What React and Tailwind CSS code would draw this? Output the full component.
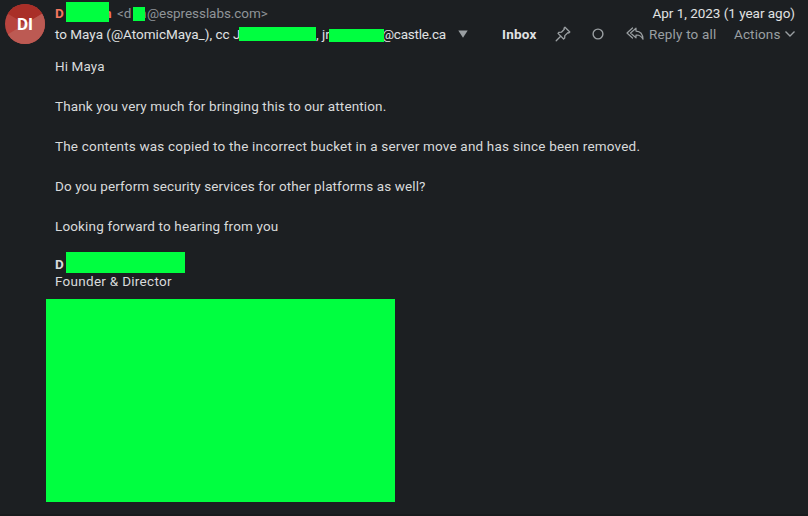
function Redaction({ className }) {
  return <span className={`relative z-10 block shrink-0 bg-[#00ff40] ${className}`} />;
}

function Avatar() {
  return (
    <div className="relative mt-1 ml-[5px] size-10 shrink-0">
      <svg viewBox="0 0 40 40" className="size-10">
        <defs>
          <clipPath id="avatar">
            <circle cx="20" cy="20" r="20" />
          </clipPath>
        </defs>
        <g clipPath="url(#avatar)">
          <rect width="40" height="40" fill="#b8443e" />
          <path d="M20 20 L0 8 V0 H40 V8 Z" fill="#a92f28" />
          <path d="M20 20 L40 8 V40 H0 V32 Z" fill="#bc5a53" />
        </g>
      </svg>
      <span className="absolute inset-0 flex items-center justify-center pt-0.5 text-[17px] font-bold text-white">DI</span>
    </div>
  );
}

function Header() {
  return (
    <header className="flex h-[46px] w-full items-start whitespace-nowrap">
      <Avatar />
      <div className="ml-[10px] w-[447px] shrink-0">
        <div className="flex h-6 items-start leading-[27px]">
          <span className="w-[11px] shrink-0 font-bold text-[#f4775f]">D</span>
          <Redaction className="mt-0.5 h-5 w-[43px]" />
          <span className="ml-[-5px] w-2 shrink-0 font-bold text-[#f4775f]">n</span>
          <span className="ml-[5px] w-4 shrink-0 text-[#8f9498]">&lt;d</span>
          <Redaction className="mt-[7px] h-[14px] w-3" />
          <span className="ml-[-6px] w-2 shrink-0 text-[#8f9498]">n</span>
          <span className="tracking-[-0.06px] text-[#8f9498]">@espresslabs.com&gt;</span>
        </div>
        <div className="flex h-[22px] items-start leading-[21px] text-[#e0e2e3]">
          <span className="w-[184px] shrink-0">to Maya (@AtomicMaya_), cc J</span>
          <Redaction className="mt-[3px] h-[14px] w-[77px]" />
          <span className="w-[13px] shrink-0 whitespace-pre">, jr</span>
          <Redaction className="mt-[5px] h-[13px] w-[55px]" />
          <span className="ml-[-2px] w-[65px] tracking-[-0.25px]">@castle.ca</span>
          <svg viewBox="0 0 10 8" className="mt-1.5 ml-[11px] h-2 w-[10px]" fill="#9a9fa2">
            <path d="M0.3 0.5H9.7L5 7.8Z" />
          </svg>
        </div>
      </div>
      <div className="w-[294px] shrink-0">
        <div className="flex h-6 justify-end leading-[27px] text-[#e0e2e3]">
          <span className="mr-px tracking-[-0.03px]">Apr 1, 2023 (1 year ago)</span>
        </div>
        <div className="flex h-[22px] items-start leading-[21px] text-[#9a9fa2]">
          <span className="w-[53px] font-bold tracking-[0.2px] text-[#e0e2e3]">Inbox</span>
          <svg viewBox="0 0 16 16" className="mt-[2px] size-4" fill="none" stroke="#9a9fa2" strokeWidth="1.3" strokeLinejoin="round" strokeLinecap="round">
            <path d="M10 1.2 14.8 6 13.7 7 12.8 6.7 9.8 9.6 9.7 12 8.6 13 3 7.4 4 6.3 6.4 6.2 9.3 3.2 9 2.2Z" />
            <path d="M5.7 10.3 1.2 14.8" />
          </svg>
          <svg viewBox="0 0 12 12" className="mt-1 ml-[21px] size-3" fill="none" stroke="#9a9fa2" strokeWidth="1.4">
            <circle cx="6" cy="6" r="4.9" />
          </svg>
          <svg viewBox="0 0 18 14" className="mt-[3px] ml-[22px] h-[14px] w-[18px]" fill="none" stroke="#9a9fa2" strokeWidth="1.2" strokeLinejoin="round" strokeLinecap="round">
            <path d="M6.5 1 1 6 6.5 11" />
            <path d="M10 1.2 4.5 6 10 10.8V8C13 7.8 15.3 8.8 17 12.2 16.8 7.2 14.3 4.3 10 4.1Z" />
          </svg>
          <span className="ml-[5px] w-[68px] tracking-[0.18px]">Reply to all</span>
          <span className="ml-[17px] w-[46px] tracking-[0.12px]">Actions</span>
          <svg viewBox="0 0 10 6" className="mt-[7px] ml-[5px] h-1.5 w-[10px]" fill="none" stroke="#9a9fa2" strokeWidth="1.4">
            <path d="M0.5 0.5 5 5 9.5 0.5" />
          </svg>
        </div>
      </div>
    </header>
  );
}

export default function App() {
  return (
    <main className="flex h-[516px] w-[808px] flex-col overflow-hidden border-b-2 border-[#181b1d] bg-[#1c1f22] font-[Roboto,sans-serif] text-[13.5px] text-[#d8dadb]">
      <Header />
      <div className="ml-[55px] flex flex-col gap-5 pt-[10px] leading-5 whitespace-nowrap">
        <p className="tracking-[0.1px]">Hi Maya</p>
        <p className="tracking-[0.135px]">Thank you very much for bringing this to our attention.</p>
        <p className="tracking-[0.19px]">The contents was copied to the incorrect bucket in a server move and has since been removed.</p>
        <p className="tracking-[0.095px]">Do you perform security services for other platforms as well?</p>
        <p className="tracking-[0.15px]">Looking forward to hearing from you</p>
      </div>
      <div className="mt-4 ml-[55px] flex h-[21px] items-start">
        <span className="w-[11px] leading-[25px] font-bold">D</span>
        <Redaction className="h-[21px] w-[119px]" />
      </div>
      <p className="ml-[55px] h-[26px] leading-[17px] tracking-[0.28px]">Founder &amp; Director</p>
      <Redaction className="ml-[46px] h-[203px] w-[349px]" />
    </main>
  );
}
